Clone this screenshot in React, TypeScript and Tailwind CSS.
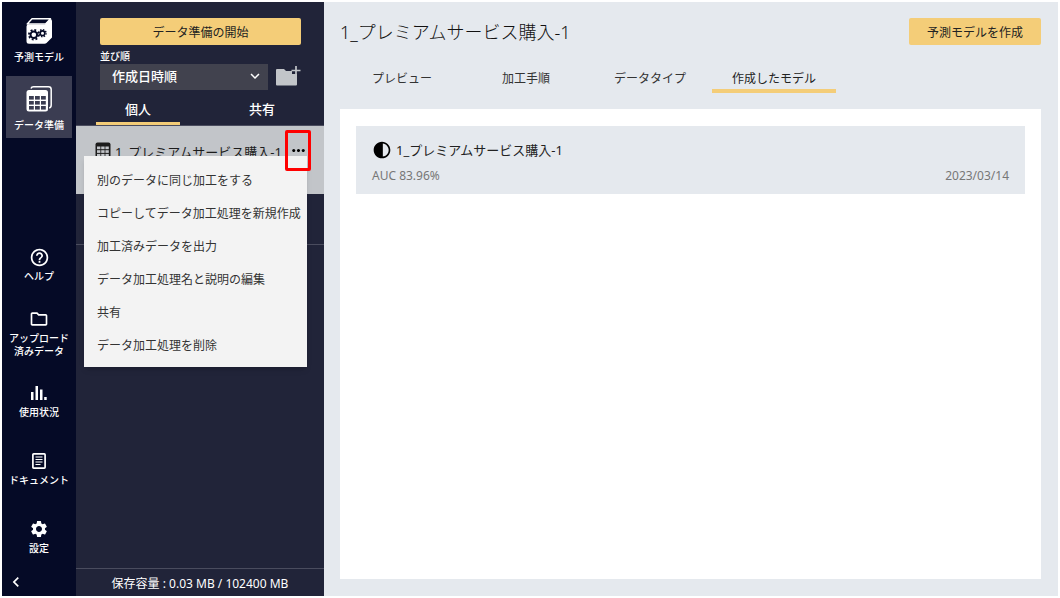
import type { ReactNode } from "react";
import {
  MdChevronLeft,
  MdContrast,
  MdExpandMore,
  MdHelpOutline,
  MdMoreHoriz,
  MdOutlineFolder,
  MdSettings,
} from "react-icons/md";

function CubeIcon() {
  return (
    <svg width="26" height="26" viewBox="0 0 26 26" aria-hidden="true">
      <path d="M6 0.700h18.500L19.500 6H1.200z" fill="none" stroke="#fff" strokeWidth="1.400" strokeLinejoin="round" />
      <path d="M2.500 6.500H19L24 1q2 0 2 2v16.500L20.500 25q-.7.8-2 .8H3Q.5 25.800.5 23.300V8.500Q.5 6.500 2.500 6.500z" fill="#fff" />
      <circle cx="7.800" cy="16.800" r="3.300" fill="none" stroke="#050a26" strokeWidth="2" />
      <circle cx="7.800" cy="16.800" r="4.900" fill="none" stroke="#050a26" strokeWidth="1.800" strokeDasharray="1.920 1.920" />
      <circle cx="16.500" cy="15.200" r="2.300" fill="none" stroke="#050a26" strokeWidth="1.600" />
      <circle cx="16.500" cy="15.200" r="3.600" fill="none" stroke="#050a26" strokeWidth="1.400" strokeDasharray="1.410 1.410" />
    </svg>
  );
}

function TablesIcon() {
  return (
    <svg width="26" height="26" viewBox="0 0 26 26" aria-hidden="true">
      <path d="M5 2.500Q5.500.8 7.500.8H22.500Q25.200.8 25.200 3.500V19Q25.200 21.500 23.200 22" fill="none" stroke="#fff" strokeWidth="1.500" />
      <rect x="0.500" y="4" width="21.500" height="21.500" rx="2.500" fill="#fff" />
      <g fill="#3b3d52">
        {[10, 15, 20].map((y) =>
          [3, 9, 15].map((x) => <rect key={`${x}-${y}`} x={x} y={y} width="4.800" height="3.600" />),
        )}
      </g>
    </svg>
  );
}

function BarsIcon() {
  return (
    <svg width="16" height="14" viewBox="0 0 16 14" fill="#fff" aria-hidden="true">
      <path d="M0 6h2.500v8H0zM4.500 0H7v14H4.500zM9 3.500h2.500V14H9zM13.200 11h2.500v3h-2.500z" />
    </svg>
  );
}

function DocumentIcon() {
  return (
    <svg width="14" height="16" viewBox="0 0 14 16" fill="none" stroke="#fff" aria-hidden="true">
      <rect x="0.900" y="0.900" width="12.200" height="14.200" rx="0.800" strokeWidth="1.700" />
      <path d="M3.500 4h7M3.500 6.500h7M3.500 9h7M3.500 11.500h5" strokeWidth="1.200" />
    </svg>
  );
}

function TableIcon() {
  return (
    <svg width="16" height="16" viewBox="0 0 16 16" className="shrink-0" aria-hidden="true">
      <rect x="0.500" y="0.500" width="15" height="15" rx="2" fill="#1c1c1c" />
      <g fill="#c2c5c9">
        {[4.5, 8.2, 11.9].map((y) =>
          [2, 6.2, 10.4].map((x) => <rect key={`${x}-${y}`} x={x} y={y} width="3.400" height="2.700" />),
        )}
      </g>
    </svg>
  );
}

function AddFolderIcon() {
  return (
    <svg width="25" height="20" viewBox="0 0 25 20" aria-hidden="true">
      <path d="M0 4q0-1 1-1h7l2 2h6v3h5v10.500q0 1-1 1H1q-1 0-1-1z" fill="#c2c5c9" />
      <path d="M20 0v9M15.500 4.500h9" stroke="#c2c5c9" strokeWidth="1.700" />
    </svg>
  );
}

function NavItem({ icon, children }: { icon: ReactNode; children: ReactNode }) {
  return (
    <a href="#" className="flex h-[68px] flex-col items-center justify-center gap-px pt-1 text-center text-[10px] leading-[13px] font-medium text-white">
      <span className="flex h-6 items-center">{icon}</span>
      <span>{children}</span>
    </a>
  );
}

function Sidebar() {
  return (
    <nav className="flex w-[74px] shrink-0 flex-col bg-[#050a26] text-white">
      <div className="flex flex-col gap-1.5 px-1 pt-1.5 text-[10px] leading-[14px] font-medium">
        <a href="#" className="flex h-[62px] flex-col items-center justify-center gap-1.5 pt-1">
          <CubeIcon />
          予測モデル
        </a>
        <a href="#" className="flex h-[62px] flex-col items-center justify-center gap-1.5 bg-[#3b3d52] pt-1">
          <TablesIcon />
          データ準備
        </a>
      </div>
      <div className="mt-auto">
        <NavItem icon={<MdHelpOutline size={21} />}>ヘルプ</NavItem>
        <NavItem icon={<MdOutlineFolder size={20} />}>
          アップロード
          <br />
          済みデータ
        </NavItem>
        <NavItem icon={<BarsIcon />}>使用状況</NavItem>
        <NavItem icon={<DocumentIcon />}>ドキュメント</NavItem>
        <NavItem icon={<MdSettings size={20} />}>設定</NavItem>
      </div>
      <button aria-label="メニューを閉じる" className="flex h-7 items-center pl-1">
        <MdChevronLeft size={20} />
      </button>
    </nav>
  );
}

const menuItems = [
  "別のデータに同じ加工をする",
  "コピーしてデータ加工処理を新規作成",
  "加工済みデータを出力",
  "データ加工処理名と説明の編集",
  "共有",
  "データ加工処理を削除",
];

function DataPanel() {
  return (
    <aside className="flex w-[248px] shrink-0 flex-col bg-[#212439] text-white">
      <div className="pt-4 pr-[23px] pl-6">
        <button className="h-[27px] w-full rounded-xs bg-[#f4cd78] pt-0.5 text-xs text-[#222]">データ準備の開始</button>
        <label htmlFor="sort" className="mt-1 block text-[10px] leading-[14px] font-medium">
          並び順
        </label>
        <div className="flex items-center gap-2">
          <div className="relative grow">
            <select id="sort" className="h-[26px] w-full appearance-none bg-[#41424e] pl-3 text-[13px] font-medium">
              <option>作成日時順</option>
            </select>
            <MdExpandMore size={18} className="pointer-events-none absolute top-1 right-1" />
          </div>
          <button aria-label="フォルダーを追加">
            <AddFolderIcon />
          </button>
        </div>
      </div>
      <div className="mt-2 flex h-7 justify-between border-b border-[#4a4c5e] px-5 text-[13px] font-medium">
        <button className="w-[84px] border-b-3 border-[#f4cd78]">個人</button>
        <button className="w-[84px] border-b-3 border-transparent">共有</button>
      </div>
      <div className="relative h-[68px] bg-[#c2c5c9] text-[#1c1c1c]">
        <div className="flex items-center pt-1 pl-[19px]">
          <TableIcon />
          <span className="ml-1 grow pt-1 text-[13px] whitespace-nowrap">1_プレミアムサービス購入-1</span>
          <button aria-label="その他" className="relative z-20 mr-[13px] flex h-[41px] w-[26px] shrink-0 items-center justify-center rounded-xs border-3 border-[#f00] text-black">
            <MdMoreHoriz size={19} className="shrink-0" />
          </button>
        </div>
        <div role="menu" className="absolute top-[30px] right-[17px] left-2 z-10 flex flex-col bg-[#f3f3f3] pt-2 pb-[5px] shadow-md">
          {menuItems.map((item) => (
            <button key={item} role="menuitem" className="h-[33px] pt-0.5 pl-[13px] text-left text-xs whitespace-nowrap text-[#333]">
              {item}
            </button>
          ))}
        </div>
      </div>
      <div className="h-[51px] border-b border-[#4a4c5e]" />
      <div className="mt-auto flex h-7 items-center justify-center border-t border-[#4a4c5e] pt-0.5 text-xs">
        保存容量 : 0.03 MB / 102400 MB
      </div>
    </aside>
  );
}

const tabs = ["プレビュー", "加工手順", "データタイプ", "作成したモデル"];

export default function App() {
  return (
    <div className="flex min-h-screen bg-white p-0.5 font-['Noto_Sans','Noto_Sans_CJK_JP',sans-serif]">
      <Sidebar />
      <DataPanel />
      <main className="flex grow flex-col bg-[#e5e9ee] pt-4 pr-[17px] pb-[17px] pl-4 text-[#222]">
        <header className="flex items-center justify-between">
          <h1 className="pt-0.5 text-lg leading-[25px] font-light text-[#111]">1_プレミアムサービス購入-1</h1>
          <button className="h-[27px] w-[132px] rounded-xs bg-[#f4cd78] pt-0.5 text-xs">予測モデルを作成</button>
        </header>
        <div role="tablist" className="mt-5 flex text-xs">
          {tabs.map((tab, i) => (
            <button
              key={tab}
              role="tab"
              aria-selected={i === 3}
              className={
                i === 3
                  ? "h-7 w-[124px] border-b-4 border-[#f4cd78] pt-1"
                  : "h-7 w-[124px] border-b-4 border-transparent pt-1 text-[#333]"
              }
            >
              {tab}
            </button>
          ))}
        </div>
        <section className="mt-4 grow bg-white px-4 py-[17px]">
          <article className="flex h-[68px] flex-col justify-center gap-2 bg-[#e5e9ee] px-4 pt-1">
            <h2 className="flex items-center gap-1 text-[13px] leading-5">
              <MdContrast size={20} className="text-black" />
              1_プレミアムサービス購入-1
            </h2>
            <p className="flex justify-between text-xs text-[#777]">
              <span>AUC 83.96%</span>
              <time>2023/03/14</time>
            </p>
          </article>
        </section>
      </main>
    </div>
  );
}
